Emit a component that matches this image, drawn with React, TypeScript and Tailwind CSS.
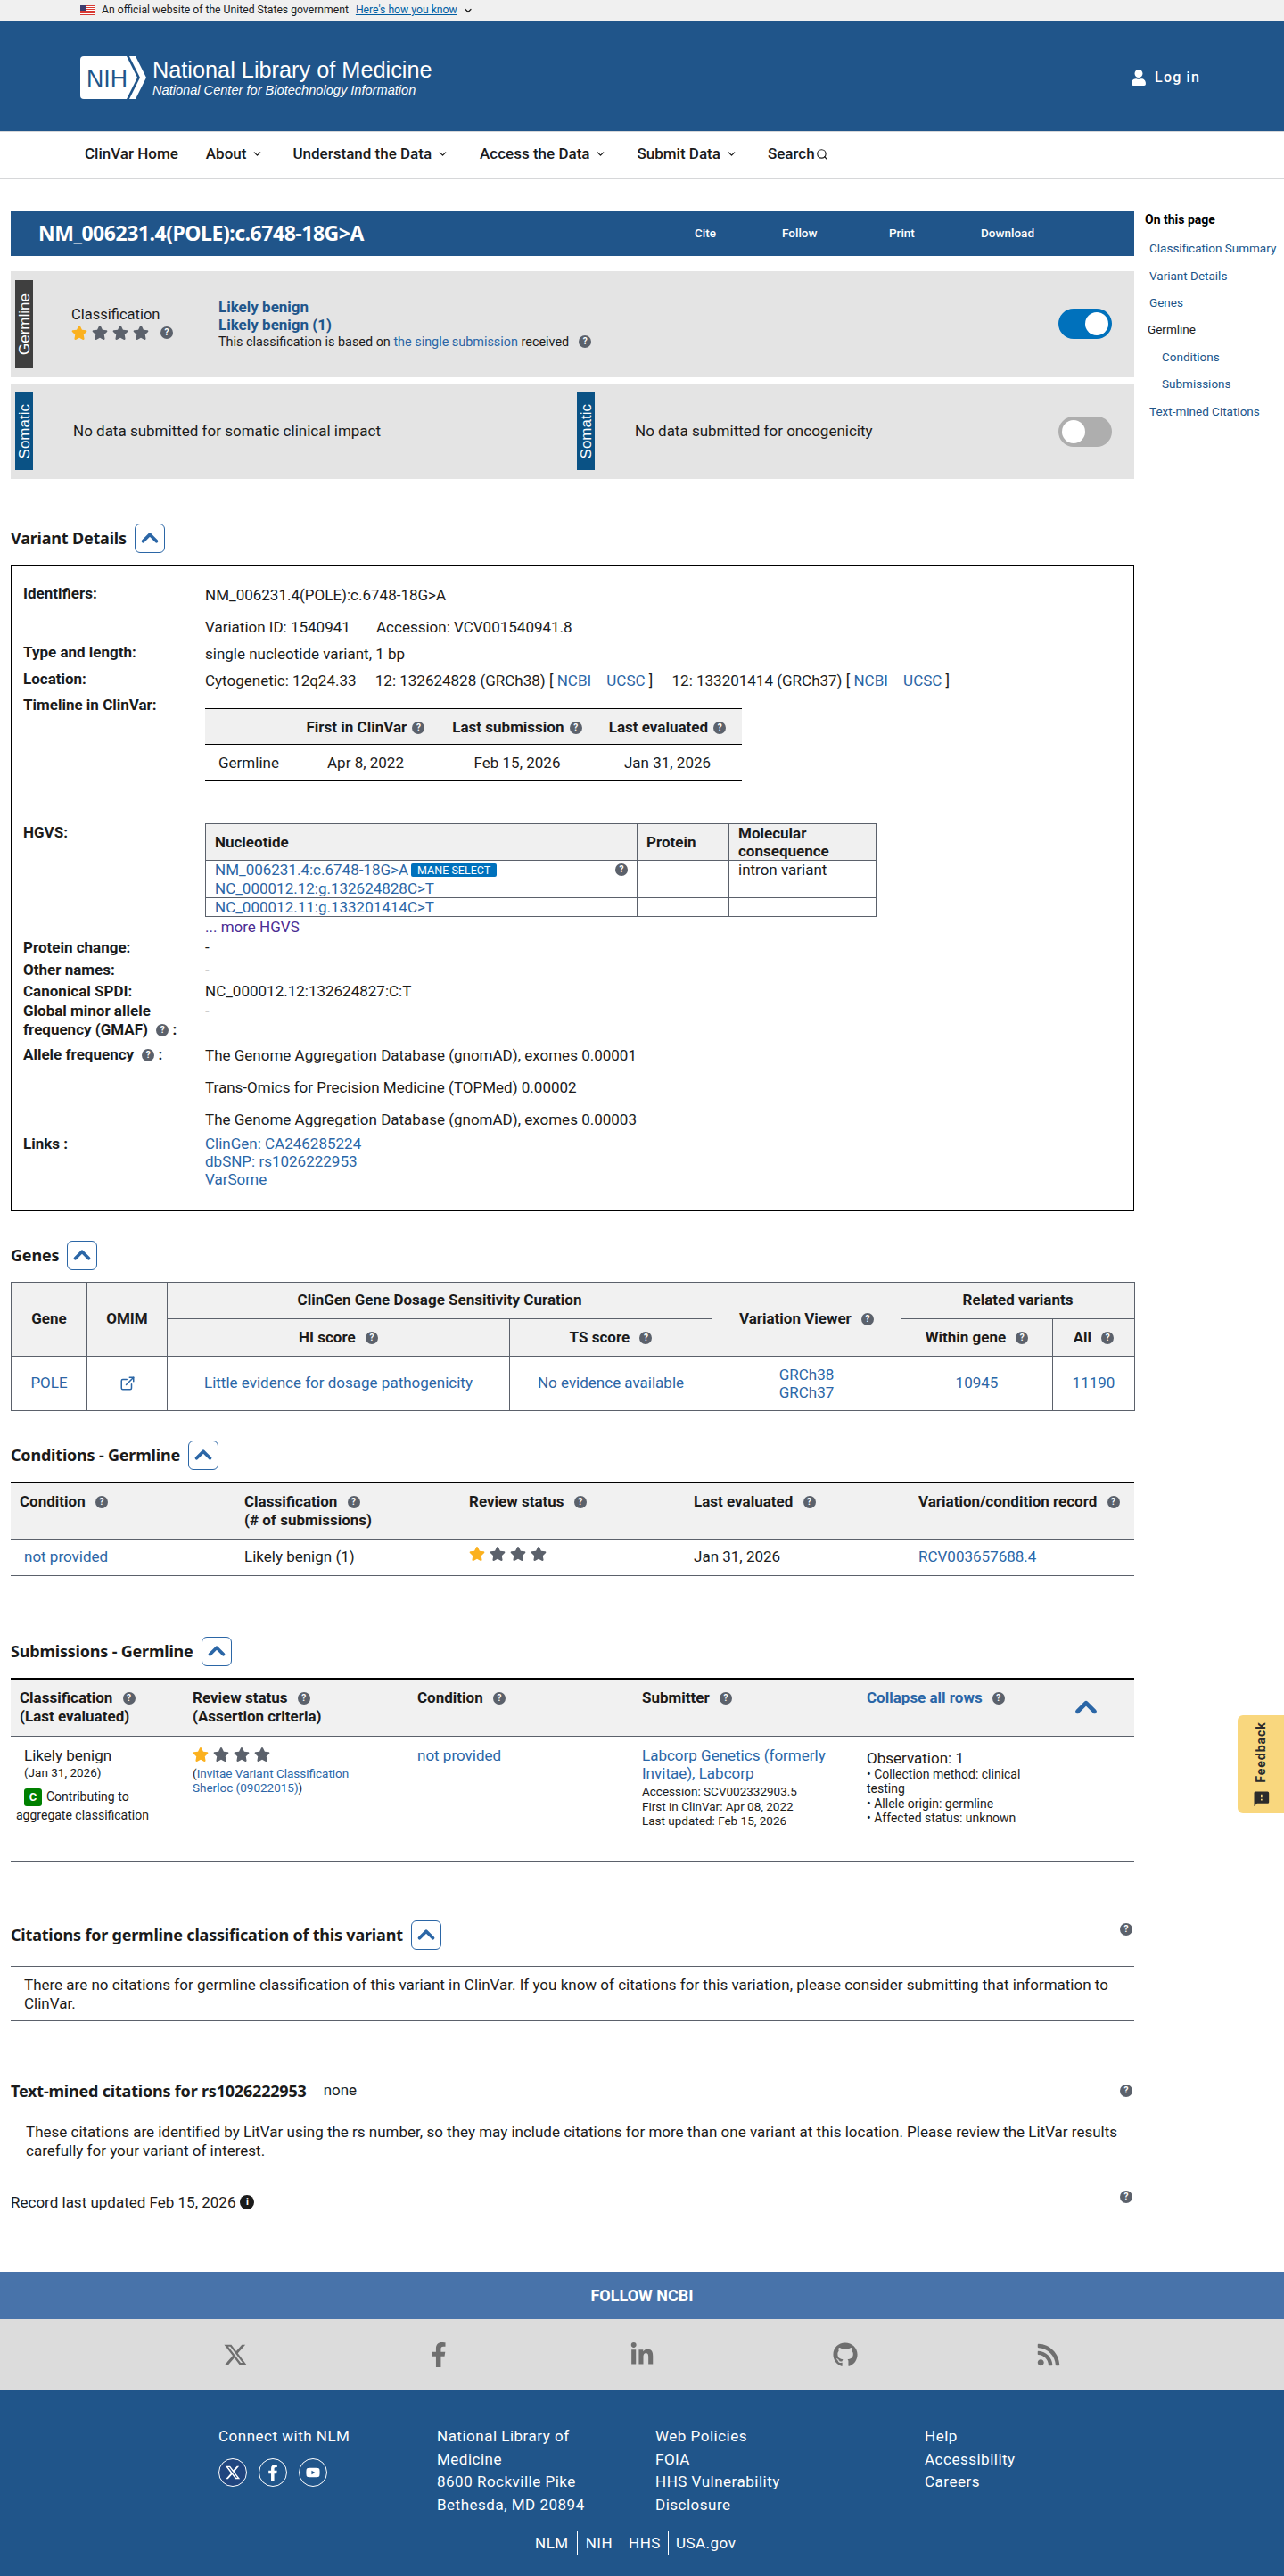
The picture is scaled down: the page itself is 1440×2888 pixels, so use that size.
import type { ReactNode } from "react";
import { ChevronDown, ChevronUp, ExternalLink, Search } from "lucide-react";
import { FaStar, FaUser, FaFacebookF, FaLinkedinIn, FaGithub, FaRss, FaYoutube } from "react-icons/fa";
import { FaXTwitter } from "react-icons/fa6";
import { MdFeedback } from "react-icons/md";

const linkCls = "text-[#2b66a6]";

const Help = ({ className = "" }: { className?: string }) => (
  <span
    className={`inline-flex h-[14px] w-[14px] shrink-0 items-center justify-center rounded-full bg-[#5b616b] align-[2px] text-[10px] font-bold leading-none text-white ${className}`}
  >
    ?
  </span>
);

const Stars = ({ gap = "gap-[5px]", size = 18 }: { gap?: string; size?: number }) => (
  <span className={`inline-flex items-center ${gap}`}>
    <FaStar size={size} className="text-[#fbb11f]" />
    <FaStar size={size} className="text-[#5b616b]" />
    <FaStar size={size} className="text-[#5b616b]" />
    <FaStar size={size} className="text-[#5b616b]" />
  </span>
);

const Heading = ({ children, button = true }: { children: ReactNode; button?: boolean }) => (
  <div className="flex h-[32px] items-center">
    <h2 className="font-['Noto_Sans',sans-serif] text-[18px] font-bold leading-none tracking-[-0.2px] text-[#1b1b1b]">
      {children}
    </h2>
    {button && (
      <span className="ml-[9px] flex h-[33px] w-[34px] items-center justify-center rounded-[6px] border border-[#2b66a6] bg-white">
        <ChevronUp size={30} strokeWidth={3} className="text-[#2b66a6]" />
      </span>
    )}
  </div>
);

const Tag = ({ children, color, className }: { children: ReactNode; color: string; className: string }) => (
  <div className={`flex w-[20px] shrink-0 items-center justify-center ${color} ${className}`}>
    <span className="rotate-180 font-['Liberation_Sans',sans-serif] text-[17px] font-medium leading-none text-white [writing-mode:vertical-rl]">
      {children}
    </span>
  </div>
);

const Row = ({ label, h, children }: { label: ReactNode; h: string; children?: ReactNode }) => (
  <div className={`flex ${h}`}>
    <div className="w-[204px] shrink-0 text-[17px] font-bold leading-[24px] text-[#1b1b1b]">{label}</div>
    <div className="min-w-0 flex-1 text-[17px] leading-[24px] text-[#1b1b1b]">{children}</div>
  </div>
);

const navItems = [
  { label: "ClinVar Home", cls: "mr-[31px]", arrow: false },
  { label: "About", cls: "mr-[33px]", arrow: true },
  { label: "Understand the Data", cls: "mr-[35px]", arrow: true },
  { label: "Access the Data", cls: "mr-[34px]", arrow: true },
  { label: "Submit Data", cls: "mr-[34px]", arrow: true },
];

const sideLinks = [
  { label: "Classification Summary", cls: "pl-[5px] text-[#20558a]" },
  { label: "Variant Details", cls: "pl-[5px] text-[#20558a]" },
  { label: "Genes", cls: "pl-[5px] text-[#20558a]" },
  { label: "Germline", cls: "pl-[3px] text-[#1b1b1b]" },
  { label: "Conditions", cls: "pl-[19px] text-[#20558a]" },
  { label: "Submissions", cls: "pl-[19px] text-[#20558a]" },
  { label: "Text-mined Citations", cls: "pl-[5px] text-[#20558a]" },
];

const Flag = () => (
  <svg width="16" height="11" viewBox="0 0 16 11">
    <rect width="16" height="11" fill="#fff" />
    {[0, 2, 4, 6, 8, 10].map((y) => (
      <rect key={y} y={y} width="16" height="1" fill="#d83933" />
    ))}
    <rect width="7" height="6" fill="#3c3b6e" />
  </svg>
);

const NihLogo = () => (
  <svg width="74" height="48" viewBox="0 0 74 48">
    <path d="M4 0H52L64 24L52 48H4a4 4 0 0 1-4-4V4a4 4 0 0 1 4-4z" fill="#fff" />
    <path d="M55 0H62L74 24L62 48H55L67 24z" fill="#fff" />
    <text
      x="7"
      y="35"
      fontFamily="Liberation Sans, sans-serif"
      fontSize="30"
      fill="#20558a"
      textLength="46"
      lengthAdjust="spacingAndGlyphs"
    >
      NIH
    </text>
  </svg>
);

export default function App() {
  return (
    <div className="relative h-[2888px] w-[1440px] overflow-hidden bg-white font-['Roboto',sans-serif] text-[#1b1b1b]">
      {/* gov banner */}
      <div className="flex h-[23px] items-center bg-[#f0f0f0] pl-[90px] text-[12.2px]">
        <Flag />
        <span className="ml-[8px]">An official website of the United States government</span>
        <span className="ml-[8px] text-[#005ea2] underline">Here's how you know</span>
        <ChevronDown size={12} strokeWidth={2.5} className="ml-[6px] text-[#1b1b1b]" />
      </div>

      {/* header */}
      <header className="flex h-[124px] items-start justify-between bg-[#20558a] pl-[90px] pr-[94px] text-white">
        <div className="mt-[40px] flex">
          <NihLogo />
          <div className="ml-[7px] font-['Liberation_Sans',sans-serif]">
            <div className="text-[25.3px] leading-[31px]">National Library of Medicine</div>
            <div className="text-[14.6px] italic leading-[15px]">National Center for Biotechnology Information</div>
          </div>
        </div>
        <div className="mt-[53px] flex items-center">
          <FaUser size={18} />
          <span className="ml-[9px] text-[16px] font-medium leading-[22px] tracking-[1.2px]">Log in</span>
        </div>
      </header>

      {/* nav */}
      <nav className="flex h-[54px] items-center border-t border-b border-t-[#d6d7d9] border-b-[#d6d7d9] pb-[3px] pl-[95px] text-[17px] font-medium text-[#1b1b1b]">
        {navItems.map((item) => (
          <div key={item.label} className={`flex items-center ${item.cls}`}>
            {item.label}
            {item.arrow && <ChevronDown size={13} strokeWidth={2.2} className="ml-[6px]" />}
          </div>
        ))}
        <div className="flex items-center">
          Search
          <Search size={14} strokeWidth={2} className="ml-[1px]" />
        </div>
      </nav>

      <div className="flex pl-[12px] pt-[35px]">
        {/* main column */}
        <main className="w-[1260px] shrink-0">
          <div className="flex h-[51px] items-center bg-[#20558a] pl-[31px] text-white">
            <h1 className="w-[705px] font-['Noto_Sans',sans-serif] text-[23px] font-bold leading-none tracking-[-0.47px]">
              NM_006231.4(POLE):c.6748-18G&gt;A
            </h1>
            <div className="flex text-[13.5px] font-medium">
              <span className="w-[124px] pl-[31px]">Cite</span>
              <span className="w-[125px] pl-[5px]">Follow</span>
              <span className="w-[103px]">Print</span>
              <span>Download</span>
            </div>
          </div>

          {/* germline summary */}
          <div className="mt-[17px] flex h-[119px] items-start bg-[#e4e4e4] pl-[5px]">
            <Tag color="bg-[#3f3f3f]" className="mt-[10px] h-[99px]">
              Germline
            </Tag>
            <div className="ml-[43px] mt-[38px] w-[165px]">
              <div className="text-[16.5px] leading-[22px]">Classification</div>
              <div className="flex items-center">
                <Stars />
                <Help className="ml-[13px]" />
              </div>
            </div>
            <div className="mt-[30px] flex-1">
              <div className="text-[17px] font-bold leading-[20px] text-[#20558a]">Likely benign</div>
              <div className="text-[17px] font-bold leading-[20px] text-[#20558a]">Likely benign (1)</div>
              <div className="text-[14.4px] leading-[20px]">
                This classification is based on <span className={linkCls}>the single submission</span> received
                <Help className="ml-[11px]" />
              </div>
            </div>
            <div className="mr-[25px] mt-[42px] flex h-[34px] w-[60px] items-center justify-end rounded-full bg-[#0071bc] pr-[4px]">
              <span className="h-[26px] w-[26px] rounded-full bg-white" />
            </div>
          </div>

          {/* somatic summary */}
          <div className="mt-[8px] flex h-[106px] items-start bg-[#e4e4e4] pl-[5px]">
            <Tag color="bg-[#0a5285]" className="mt-[9px] h-[87px]">
              Somatic
            </Tag>
            <div className="ml-[45px] mt-[41px] w-[565px] text-[17px] leading-[22px]">
              No data submitted for somatic clinical impact
            </div>
            <Tag color="bg-[#0a5285]" className="mt-[9px] h-[87px]">
              Somatic
            </Tag>
            <div className="ml-[45px] mt-[41px] flex-1 text-[17px] leading-[22px]">
              No data submitted for oncogenicity
            </div>
            <div className="mr-[25px] mt-[36px] flex h-[34px] w-[60px] items-center rounded-full bg-[#aeaeae] pl-[4px]">
              <span className="h-[26px] w-[26px] rounded-full bg-white" />
            </div>
          </div>

          {/* variant details */}
          <section className="mt-[50px]">
            <Heading>Variant Details</Heading>
            <div className="mt-[14px] h-[725px] border border-black pl-[13px] pt-[19px]">
              <Row label="Identifiers:" h="h-[66px]">
                <div className="pt-[2px]">NM_006231.4(POLE):c.6748-18G&gt;A</div>
                <div className="mt-[12px] flex">
                  <span className="w-[192px]">Variation ID: 1540941</span>
                  <span>Accession: VCV001540941.8</span>
                </div>
              </Row>
              <Row label="Type and length:" h="h-[30px]">
                <div className="pt-[2px]">single nucleotide variant, 1 bp</div>
              </Row>
              <Row label="Location:" h="h-[29px]">
                <div className="pt-[2px]">
                  Cytogenetic: 12q24.33 <span className="ml-[17px]">12: 132624828 (GRCh38) [</span>{" "}
                  <span className={linkCls}>NCBI</span> <span className={`ml-[13px] ${linkCls}`}>UCSC</span> ]{" "}
                  <span className="ml-[17px]">12: 133201414 (GRCh37) [</span> <span className={linkCls}>NCBI</span>{" "}
                  <span className={`ml-[13px] ${linkCls}`}>UCSC</span> ]
                </div>
              </Row>
              <Row label="Timeline in ClinVar:" h="h-[143px]">
                <table className="mt-[16px] w-[602px] table-fixed border-collapse border-y border-black">
                  <colgroup>
                    <col className="w-[95px]" />
                    <col className="w-[170px]" />
                    <col className="w-[170px]" />
                    <col className="w-[167px]" />
                  </colgroup>
                  <thead>
                    <tr className="h-[40px] border-b border-black bg-[#f0f0f0] font-bold">
                      <th />
                      <th className="whitespace-nowrap text-center font-bold">
                        First in ClinVar <Help className="ml-[2px]" />
                      </th>
                      <th className="whitespace-nowrap text-center font-bold">
                        Last submission <Help className="ml-[2px]" />
                      </th>
                      <th className="whitespace-nowrap text-center font-bold">
                        Last evaluated <Help className="ml-[2px]" />
                      </th>
                    </tr>
                  </thead>
                  <tbody>
                    <tr className="h-[41px]">
                      <td className="pl-[15px]">Germline</td>
                      <td className="text-center">Apr 8, 2022</td>
                      <td className="text-center">Feb 15, 2026</td>
                      <td className="text-center">Jan 31, 2026</td>
                    </tr>
                  </tbody>
                </table>
              </Row>
              <Row label="HGVS:" h="h-[129px]">
                <table className="mt-[2px] w-[752px] table-fixed border-collapse border border-[#5b616b]">
                  <colgroup>
                    <col className="w-[484px]" />
                    <col className="w-[103px]" />
                    <col className="w-[165px]" />
                  </colgroup>
                  <thead>
                    <tr className="h-[41px] bg-[#f0f0f0] text-left leading-[20px]">
                      <th className="border border-[#5b616b] pl-[10px] font-bold">Nucleotide</th>
                      <th className="border border-[#5b616b] pl-[10px] font-bold">Protein</th>
                      <th className="border border-[#5b616b] pl-[10px] font-bold">
                        Molecular
                        <br />
                        consequence
                      </th>
                    </tr>
                  </thead>
                  <tbody className="leading-[20px]">
                    <tr className="h-[21px]">
                      <td className="border border-[#5b616b] pl-[10px]">
                        <div className="flex items-center pr-[10px]">
                          <span className={linkCls}>NM_006231.4:c.6748-18G&gt;A</span>
                          <span className="ml-[3px] rounded-[2px] bg-[#0071bc] px-[7px] text-[12.5px] leading-[15px] text-white">
                            MANE SELECT
                          </span>
                          <Help className="ml-auto" />
                        </div>
                      </td>
                      <td className="border border-[#5b616b]" />
                      <td className="border border-[#5b616b] pl-[10px]">intron variant</td>
                    </tr>
                    <tr className="h-[21px]">
                      <td className={`border border-[#5b616b] pl-[10px] ${linkCls}`}>NC_000012.12:g.132624828C&gt;T</td>
                      <td className="border border-[#5b616b]" />
                      <td className="border border-[#5b616b]" />
                    </tr>
                    <tr className="h-[21px]">
                      <td className={`border border-[#5b616b] pl-[10px] ${linkCls}`}>NC_000012.11:g.133201414C&gt;T</td>
                      <td className="border border-[#5b616b]" />
                      <td className="border border-[#5b616b]" />
                    </tr>
                  </tbody>
                </table>
                <div className="leading-[22px] text-[#4c2c92]">... more HGVS</div>
              </Row>
              <Row label="Protein change:" h="h-[25px]">
                -
              </Row>
              <Row label="Other names:" h="h-[24px]">
                -
              </Row>
              <Row label="Canonical SPDI:" h="h-[24px]">
                NC_000012.12:132624827:C:T
              </Row>
              <Row
                h="h-[47px]"
                label={
                  <div className="leading-[21px]">
                    Global minor allele
                    <br />
                    frequency (GMAF) <Help className="ml-[5px]" /> :
                  </div>
                }
              >
                <div className="leading-[21px]">-</div>
              </Row>
              <Row
                h="h-[100px]"
                label={
                  <>
                    Allele frequency <Help className="ml-[5px]" /> :
                  </>
                }
              >
                <div className="pt-[1px]">The Genome Aggregation Database (gnomAD), exomes 0.00001</div>
                <div className="mt-[12px]">Trans-Omics for Precision Medicine (TOPMed) 0.00002</div>
                <div className="mt-[12px]">The Genome Aggregation Database (gnomAD), exomes 0.00003</div>
              </Row>
              <Row label="Links :" h="h-[70px]">
                <div className={`pt-[2px] leading-[20px] ${linkCls}`}>
                  <div>ClinGen: CA246285224</div>
                  <div>dbSNP: rs1026222953</div>
                  <div>VarSome</div>
                </div>
              </Row>
            </div>
          </section>

          {/* genes */}
          <section className="mt-[33px]">
            <Heading>Genes</Heading>
            <table className="mt-[14px] w-[1260px] table-fixed border-collapse border border-[#5b616b] text-center text-[17px]">
              <colgroup>
                <col className="w-[85px]" />
                <col className="w-[90px]" />
                <col className="w-[384px]" />
                <col className="w-[227px]" />
                <col className="w-[212px]" />
                <col className="w-[170px]" />
                <col className="w-[92px]" />
              </colgroup>
              <thead className="bg-[#f1f1f1]">
                <tr className="h-[41px]">
                  <th rowSpan={2} className="border border-[#5b616b] font-bold">
                    Gene
                  </th>
                  <th rowSpan={2} className="border border-[#5b616b] font-bold">
                    OMIM
                  </th>
                  <th colSpan={2} className="border border-[#5b616b] font-bold">
                    ClinGen Gene Dosage Sensitivity Curation
                  </th>
                  <th rowSpan={2} className="border border-[#5b616b] font-bold">
                    Variation Viewer <Help className="ml-[7px]" />
                  </th>
                  <th colSpan={2} className="border border-[#5b616b] font-bold">
                    Related variants
                  </th>
                </tr>
                <tr className="h-[42px]">
                  <th className="border border-[#5b616b] font-bold">
                    HI score <Help className="ml-[7px]" />
                  </th>
                  <th className="border border-[#5b616b] font-bold">
                    TS score <Help className="ml-[7px]" />
                  </th>
                  <th className="border border-[#5b616b] font-bold">
                    Within gene <Help className="ml-[7px]" />
                  </th>
                  <th className="border border-[#5b616b] font-bold">
                    All <Help className="ml-[7px]" />
                  </th>
                </tr>
              </thead>
              <tbody className={linkCls}>
                <tr className="h-[61px]">
                  <td className="border border-[#5b616b]">POLE</td>
                  <td className="border border-[#5b616b]">
                    <ExternalLink size={18} strokeWidth={2} className="mx-auto" />
                  </td>
                  <td className="border border-[#5b616b]">Little evidence for dosage pathogenicity</td>
                  <td className="border border-[#5b616b]">No evidence available</td>
                  <td className="border border-[#5b616b] leading-[20px]">
                    GRCh38
                    <br />
                    GRCh37
                  </td>
                  <td className="border border-[#5b616b]">10945</td>
                  <td className="border border-[#5b616b]">11190</td>
                </tr>
              </tbody>
            </table>
          </section>

          {/* conditions */}
          <section className="mt-[33px]">
            <Heading>Conditions - Germline</Heading>
            <div className="mt-[14px] border-t-2 border-black">
              <div className="grid h-[63px] grid-cols-[repeat(5,252px)] border-b border-[#5b616b] bg-[#f1f1f1] pl-[10px] pt-[10px] text-[17px] font-bold leading-[21px]">
                <div>
                  Condition <Help className="ml-[7px]" />
                </div>
                <div>
                  Classification <Help className="ml-[7px]" />
                  <br />
                  (# of submissions)
                </div>
                <div>
                  Review status <Help className="ml-[7px]" />
                </div>
                <div>
                  Last evaluated <Help className="ml-[7px]" />
                </div>
                <div className="whitespace-nowrap">
                  Variation/condition record <Help className="ml-[7px]" />
                </div>
              </div>
              <div className="grid h-[41px] grid-cols-[repeat(5,252px)] items-center border-b border-[#5b616b] pl-[10px] text-[17px]">
                <div className={`pl-[5px] ${linkCls}`}>not provided</div>
                <div>Likely benign (1)</div>
                <div>
                  <Stars />
                </div>
                <div>Jan 31, 2026</div>
                <div className={linkCls}>RCV003657688.4</div>
              </div>
            </div>
          </section>

          {/* submissions */}
          <section className="mt-[68px]">
            <Heading>Submissions - Germline</Heading>
            <div className="mt-[14px] border-t-2 border-black">
              <div className="flex h-[64px] border-b border-[#5b616b] bg-[#f1f1f1] pl-[10px] pt-[10px] text-[17px] font-bold leading-[21px]">
                <div className="w-[194px]">
                  Classification <Help className="ml-[7px]" />
                  <br />
                  (Last evaluated)
                </div>
                <div className="w-[252px]">
                  Review status <Help className="ml-[7px]" />
                  <br />
                  (Assertion criteria)
                </div>
                <div className="w-[252px]">
                  Condition <Help className="ml-[7px]" />
                </div>
                <div className="w-[252px]">
                  Submitter <Help className="ml-[7px]" />
                </div>
                <div className="w-[227px]">
                  <span className={linkCls}>Collapse all rows</span> <Help className="ml-[7px]" />
                </div>
                <ChevronUp size={38} strokeWidth={3} className="mt-[2px] text-[#2b66a6]" />
              </div>
              <div className="flex h-[140px] border-b border-[#5b616b] pl-[10px] pt-[11px] text-[13.5px] leading-[16px]">
                <div className="w-[194px]">
                  <div className="pl-[5px] text-[17px] leading-[20px]">Likely benign</div>
                  <div className="pl-[5px] leading-[18px]">(Jan 31, 2026)</div>
                  <div className="mt-[8px] whitespace-nowrap pl-[5px] text-[14px] leading-[20px]">
                    <span className="mr-[5px] inline-block h-[20px] w-[20px] rounded-[3px] bg-[#008000] text-center text-[13px] font-bold leading-[20px] text-white">
                      C
                    </span>
                    Contributing to
                  </div>
                  <div className="-ml-[4px] whitespace-nowrap text-[14px] leading-[20px]">aggregate classification</div>
                </div>
                <div className="w-[252px]">
                  <div className="h-[20px]">
                    <Stars />
                  </div>
                  <div className={`mt-[2px] ${linkCls}`}>
                    <span className="text-[#1b1b1b]">(</span>Invitae Variant Classification
                    <br />
                    Sherloc (09022015)<span className="text-[#1b1b1b]">)</span>
                  </div>
                </div>
                <div className={`w-[252px] text-[17px] leading-[20px] ${linkCls}`}>not provided</div>
                <div className="w-[252px]">
                  <div className={`text-[17px] leading-[20px] ${linkCls}`}>
                    Labcorp Genetics (formerly
                    <br />
                    Invitae), Labcorp
                  </div>
                  <div className="mt-[2px] leading-[16.5px]">
                    Accession: SCV002332903.5
                    <br />
                    First in ClinVar: Apr 08, 2022
                    <br />
                    Last updated: Feb 15, 2026
                  </div>
                </div>
                <div className="w-[190px] pt-[3px]">
                  <div className="text-[17px] leading-[20px]">Observation: 1</div>
                  <div className="text-[14px] leading-[16.3px]">
                    • Collection method: clinical
                    <br />
                    testing
                    <br />• Allele origin: germline
                    <br />• Affected status: unknown
                  </div>
                </div>
              </div>
            </div>
          </section>

          {/* citations */}
          <section className="mt-[66px]">
            <div className="flex items-start justify-between">
              <Heading>Citations for germline classification of this variant</Heading>
              <Help className="mr-[2px] mt-[3px]" />
            </div>
            <div className="mt-[19px] h-[62px] border-y border-[#5b616b] pl-[15px] pr-[20px] pt-[10px] text-[17px] leading-[20.5px]">
              There are no citations for germline classification of this variant in ClinVar. If you know of citations
              for this variation, please consider submitting that information to ClinVar.
            </div>
          </section>

          <section className="mt-[62px]">
            <div className="flex h-[32px] items-center justify-between">
              <div className="flex items-center">
                <Heading button={false}>Text-mined citations for rs1026222953</Heading>
                <span className="ml-[19px] text-[17px]">none</span>
              </div>
              <Help className="mr-[2px]" />
            </div>
            <p className="mt-[20px] pl-[17px] pr-[10px] text-[17px] leading-[20.5px]">
              These citations are identified by LitVar using the rs number, so they may include citations for more than
              one variant at this location. Please review the LitVar results carefully for your variant of interest.
            </p>
            <div className="mt-[37px] flex items-start justify-between">
              <div className="flex items-center text-[17px] leading-[22px]">
                Record last updated Feb 15, 2026
                <span className="ml-[5px] flex h-[16px] w-[16px] items-center justify-center rounded-full bg-[#1b1b1b] text-[11px] font-bold text-white">
                  i
                </span>
              </div>
              <Help className="mr-[2px] -mt-[2px]" />
            </div>
          </section>
        </main>

        {/* on this page */}
        <aside className="ml-[12px] w-[156px] text-[13.5px] leading-[20px]">
          <div className="text-[14px] font-bold text-black">On this page</div>
          <ul className="mt-[7px]">
            {sideLinks.map((l) => (
              <li key={l.label} className={`flex h-[30.4px] items-center whitespace-nowrap ${l.cls}`}>
                {l.label}
              </li>
            ))}
          </ul>
        </aside>
      </div>

      {/* feedback tab */}
      <div className="absolute left-[1388px] top-[1923px] flex h-[110px] w-[52px] items-center justify-center rounded-l-[6px] bg-[#f9d77e]">
        <div className="flex -rotate-90 items-center whitespace-nowrap text-[14px] font-bold tracking-[1px] text-[#2b2b2b]">
          <MdFeedback size={20} className="mr-[8px] rotate-90" />
          Feedback
        </div>
      </div>

      {/* footer */}
      <footer className="absolute inset-x-0 top-[2547px] text-white">
        <div className="flex h-[53px] items-center justify-center bg-[#4873aa] text-[18px] font-bold">FOLLOW NCBI</div>
        <div className="flex h-[80px] items-center bg-[#dcdcdc] pl-[250px] text-[#6f6f6f]">
          <div className="flex w-[228px]">
            <FaXTwitter size={28} />
          </div>
          <div className="flex w-[228px]">
            <FaFacebookF size={28} />
          </div>
          <div className="flex w-[228px]">
            <FaLinkedinIn size={28} />
          </div>
          <div className="flex w-[228px]">
            <FaGithub size={28} />
          </div>
          <FaRss size={28} />
        </div>
        <div className="h-[208px] bg-[#20558a] pt-[39px]">
          <div className="flex pl-[245px] text-[17px] leading-[25.6px] tracking-[0.5px]">
            <div className="w-[245px]">
              Connect with NLM
              <div className="mt-[11px] flex gap-[13px]">
                <span className="flex h-[32px] w-[32px] items-center justify-center rounded-full border border-white bg-[#20457f]">
                  <FaXTwitter size={18} />
                </span>
                <span className="flex h-[32px] w-[32px] items-center justify-center rounded-full border border-white">
                  <FaFacebookF size={18} />
                </span>
                <span className="flex h-[32px] w-[32px] items-center justify-center rounded-full border border-white">
                  <FaYoutube size={16} />
                </span>
              </div>
            </div>
            <div className="w-[245px]">
              National Library of
              <br />
              Medicine
              <br />
              8600 Rockville Pike
              <br />
              Bethesda, MD 20894
            </div>
            <div className="w-[302px]">
              Web Policies
              <br />
              FOIA
              <br />
              HHS Vulnerability
              <br />
              Disclosure
            </div>
            <div>
              Help
              <br />
              Accessibility
              <br />
              Careers
            </div>
          </div>
          <div className="mt-[17px] flex h-[27px] items-center pl-[600px] text-[17px] tracking-[0.5px]">
            <span className="flex h-full items-center border-r border-white pr-[9px]">NLM</span>
            <span className="flex h-full items-center border-r border-white px-[9px]">NIH</span>
            <span className="flex h-full items-center border-r border-white px-[8px]">HHS</span>
            <span className="pl-[8px]">USA.gov</span>
          </div>
        </div>
      </footer>
    </div>
  );
}
